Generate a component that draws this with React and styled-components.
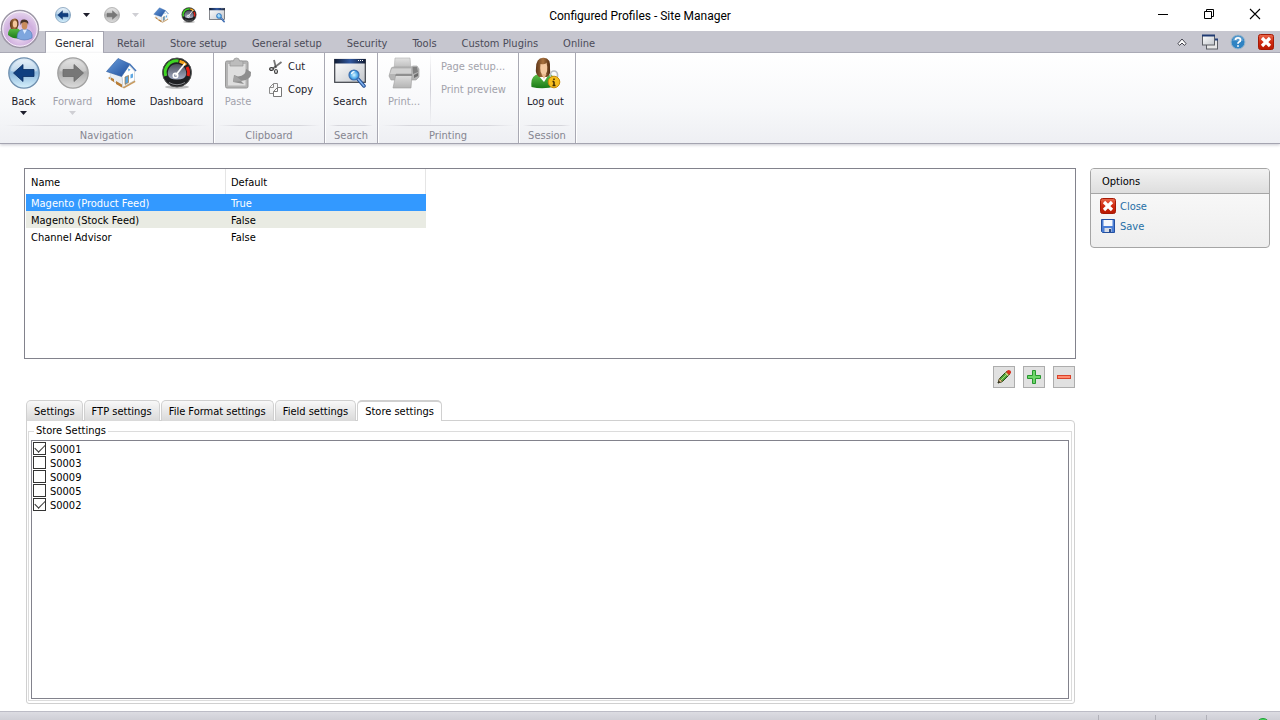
import React from "react";
import styled, { createGlobalStyle } from "styled-components";

const GlobalStyle = createGlobalStyle`
  * {
    box-sizing: border-box;
  }

  body {
    margin: 0;
    background: #ffffff;
    color: #000000;
    font-family: "DejaVu Sans Condensed", "DejaVu Sans", Tahoma, sans-serif;
    font-size: 11px;
    line-height: 14px;
  }

  button,
  input {
    font: inherit;
    margin: 0;
    padding: 0;
  }

  svg {
    display: block;
    flex: none;
  }
`;

const Window = styled.div`
  display: flex;
  flex-direction: column;
  height: 100vh;
  overflow: hidden;
  position: relative;
`;

const PlainButton = styled.button`
  align-items: center;
  background: none;
  border: 0;
  color: inherit;
  display: flex;
  justify-content: center;
`;

/* title bar */

const TitleBar = styled.header`
  align-items: center;
  display: grid;
  flex: none;
  grid-template-columns: 1fr auto 1fr;
  height: 31px;
`;

const QuickAccess = styled.div`
  align-items: center;
  display: flex;
  gap: 12px;
  padding: 0 0 2px 55px;
`;

const QuickSplit = styled.div`
  align-items: center;
  display: flex;
  gap: 12px;
  width: 37px;
`;

const WindowTitle = styled.h1`
  font-family: Roboto, "Segoe UI", sans-serif;
  font-size: 12px;
  font-weight: 400;
  line-height: 16px;
  margin: 0;
  white-space: nowrap;
`;

const WindowButtons = styled.div`
  display: flex;
  justify-content: flex-end;
  padding: 0 2px 3px 0;

  & > button {
    height: 28px;
    width: 46px;
  }
`;

const AppButton = styled(PlainButton)`
  left: 0;
  position: absolute;
  top: 9px;
`;

/* ribbon */

const RibbonTabs = styled.nav`
  align-items: stretch;
  background: #c6c6cf;
  border-bottom: 1px solid #a4a4b0;
  display: flex;
  flex: none;
  height: 22px;
  padding-left: 45px;
`;

const RibbonTab = styled.button`
  background: ${(p) => (p.$active ? "#ffffff" : "none")};
  border: 1px solid ${(p) => (p.$active ? "#a4a4b0" : "transparent")};
  border-bottom: 0;
  color: ${(p) => (p.$active ? "#1e1e2c" : "#4b4b58")};
  margin-bottom: ${(p) => (p.$active ? "-1px" : "0")};
  padding: ${(p) => (p.$active ? "2px 9px 0" : "4px 11px 0 12px")};
  white-space: nowrap;
`;

const RibbonTools = styled.div`
  align-items: center;
  display: flex;
  gap: 12px;
  margin-left: auto;
  padding-right: 6px;
`;

const Ribbon = styled.section`
  background: linear-gradient(#ffffff, #f7f8fa 60%, #eeeff3);
  border-bottom: 1px solid #a4a4b0;
  box-shadow: 0 1px 3px #c8c8d0;
  display: flex;
  flex: none;
  height: 91px;
`;

const Group = styled.div`
  border-right: 1px solid #a9a9b3;
  box-shadow: 1px 0 0 #ffffff;
  display: flex;
  flex-direction: column;
  width: ${(p) => p.$width}px;
`;

const GroupBody = styled.div`
  display: flex;
  flex: 1;
`;

const GroupLabel = styled.div`
  background: linear-gradient(90deg, transparent, #d6d6dc 20%, #d6d6dc 80%, transparent) top / 100% 1px no-repeat;
  color: #858590;
  height: 18px;
  margin: 0 4px;
  padding-top: 4px;
  text-align: center;
`;

const LargeButton = styled(PlainButton)`
  align-self: flex-start;
  color: #1e1e2c;
  flex-direction: column;
  padding-top: 4px;
  white-space: nowrap;
  width: ${(p) => p.$width}px;

  & > span {
    margin: 6px 0 2px;
  }

  &:disabled {
    color: #a2a2ab;
  }
`;

const SmallButtons = styled.div`
  align-items: flex-start;
  color: #1e1e2c;
  display: flex;
  flex-direction: column;
  gap: 7px;
  padding: 6px 0 0 ${(p) => p.$indent}px;

  & > button {
    gap: 4px;
    height: 16px;
    white-space: nowrap;
  }

  & > button:disabled {
    color: #a2a2ab;
  }
`;

const Divider = styled.div`
  background: linear-gradient(transparent, #d0d0d7, transparent);
  width: 1px;
`;

/* page */

const Page = styled.main`
  display: grid;
  flex: 1;
  gap: 14px;
  grid-template-columns: minmax(0, 1fr) 180px;
  min-height: 0;
  padding: 24px 10px 7px 24px;
`;

const Column = styled.div`
  display: flex;
  flex-direction: column;
  min-height: 0;
`;

const ProfileList = styled.div`
  border: 1px solid #82828c;
  flex: none;
  height: 191px;
  padding: 0 1px;
`;

const ProfileTable = styled.table`
  border-collapse: separate;
  border-spacing: 0;
  table-layout: fixed;
  width: 400px;

  & th,
  & td {
    font-weight: 400;
    height: 17px;
    padding: 3px 5px 0;
    text-align: left;
  }

  & th {
    border-right: 1px solid #e5e5e5;
    height: 25px;
  }
`;

const rowColors = {
  selected: "background: #3399ff; color: #ffffff;",
  shaded: "background: #e9ebe3;",
};

const ProfileRow = styled.tr`
  ${(p) => rowColors[p.$look]}
`;

const ListActions = styled.div`
  display: flex;
  gap: 8px;
  justify-content: flex-end;
  padding: 7px 1px 12px 0;
`;

const ActionButton = styled(PlainButton)`
  background: #e1e1e1;
  border: 1px solid #adadad;
  height: 22px;
  width: 22px;
`;

const Tabs = styled.div`
  display: flex;
  gap: 1px;
  padding-left: 2px;
`;

const Tab = styled.button`
  background: ${(p) => (p.$active ? "#ffffff" : "linear-gradient(#f8f8f8, #d9d9d9)")};
  border: 1px solid #d0d0d0;
  border-bottom: 0;
  border-radius: 5px 5px 0 0;
  border-top-width: ${(p) => (p.$active ? "2px" : "1px")};
  height: 21px;
  margin-bottom: ${(p) => (p.$active ? "-1px" : "0")};
  padding: ${(p) => (p.$active ? "0" : "1px")} 7px 0;
  position: relative;
  white-space: nowrap;
  z-index: 1;
`;

const TabPanel = styled.div`
  border: 1px solid #d0d0d0;
  border-radius: 0 4px 3px 3px;
  display: flex;
  flex: 1;
  margin: -1px 1px 0 2px;
  min-height: 0;
  padding: 3px 2px 2px 1px;
`;

const StoreGroup = styled.fieldset`
  border: 1px solid #dcdcdc;
  display: flex;
  flex: 1;
  margin: 0;
  min-width: 0;
  padding: 2px 2px 1px;

  & > legend {
    margin-left: 3px;
    padding: 0 2px;
  }
`;

const StoreList = styled.div`
  border: 1px solid #82828c;
  flex: 1;
  padding: 1px;
`;

const StoreRow = styled.label`
  align-items: flex-start;
  display: flex;
  gap: 4px;
  height: 14px;
  line-height: 16px;
`;

const CheckBox = styled.input`
  appearance: none;
  background: #ffffff;
  border: 1px solid #333333;
  display: grid;
  height: 13px;
  place-content: center;
  width: 13px;

  &:checked::before {
    border: solid #333333;
    border-width: 0 0 1px 1px;
    content: "";
    height: 5px;
    margin-bottom: 3px;
    transform: rotate(-45deg);
    width: 9px;
  }
`;

const OptionsPanel = styled.aside`
  align-self: start;
  background: linear-gradient(#fcfcfc, #eeeeee);
  border: 1px solid #a5a5a5;
  border-radius: 4px;
  min-height: 80px;
  overflow: hidden;

  & > h2 {
    background: linear-gradient(#f2f2f2, #dedede);
    border-bottom: 1px solid #a5a5a5;
    font-size: 11px;
    font-weight: 400;
    height: 25px;
    line-height: 26px;
    margin: 0;
    padding-left: 11px;
  }
`;

const OptionLinks = styled.div`
  display: flex;
  flex-direction: column;
  gap: 2px;
  padding: 4px 9px;
`;

const OptionLink = styled.a`
  align-items: flex-start;
  color: #266fa6;
  display: flex;
  gap: 4px;
  line-height: 18px;
  text-decoration: none;
`;

const StatusBar = styled.footer`
  background: linear-gradient(#dcdce2, #cfcfd6);
  border-top: 1px solid #bcbcc6;
  display: flex;
  flex: none;
  height: 9px;
  justify-content: flex-end;
  overflow: hidden;
  padding: 3px 10px 0 0;
`;

const StatusCell = styled.div`
  border-left: 1px solid #b0b0b8;
  display: flex;
  flex: none;
  height: 20px;
  justify-content: flex-end;
  width: ${(p) => p.$width}px;

  & > svg {
    margin-top: 3px;
  }
`;

/* icons */

const Icon = ({ size = 32, box = 32, children }) => (
  <svg width={size} height={size} viewBox={`0 0 ${box} ${box}`} aria-hidden="true">
    {children}
  </svg>
);

const IconColors = () => (
  <svg width="0" height="0" style={{ position: "absolute" }} aria-hidden="true">
    <defs>
      <linearGradient id="blueBall" x2="0" y2="1">
        <stop offset="0" stopColor="#e4eff8" />
        <stop offset=".5" stopColor="#8db8dc" />
        <stop offset="1" stopColor="#d9f2fd" />
      </linearGradient>
      <linearGradient id="grayBall" x2="0" y2="1">
        <stop offset="0" stopColor="#dedede" />
        <stop offset=".5" stopColor="#b0b0b0" />
        <stop offset="1" stopColor="#dcdcdc" />
      </linearGradient>
      <linearGradient id="roof" x2="1" y2="1">
        <stop offset="0" stopColor="#6b9fdc" />
        <stop offset="1" stopColor="#1c4c9c" />
      </linearGradient>
      <linearGradient id="gray" x2="0" y2="1">
        <stop offset="0" stopColor="#e2e2e2" />
        <stop offset="1" stopColor="#b4b4b4" />
      </linearGradient>
      <linearGradient id="screen" x2="1" y2="1">
        <stop offset="0" stopColor="#ffffff" />
        <stop offset="1" stopColor="#c3c7cc" />
      </linearGradient>
      <linearGradient id="navy" x2="1" y2="0">
        <stop offset="0" stopColor="#111c33" />
        <stop offset=".5" stopColor="#31589f" />
        <stop offset="1" stopColor="#111c33" />
      </linearGradient>
      <linearGradient id="dial" x2="0" y2="1">
        <stop offset="0" stopColor="#4b4f5c" />
        <stop offset="1" stopColor="#a5acc4" />
      </linearGradient>
      <radialGradient id="orb" cx=".5" cy=".65" r=".6">
        <stop offset="0" stopColor="#f3e4f6" />
        <stop offset=".6" stopColor="#cfaede" />
        <stop offset="1" stopColor="#e4d3ec" />
      </radialGradient>
      <radialGradient id="lens">
        <stop offset="0" stopColor="#d5f5ff" />
        <stop offset="1" stopColor="#1b8be0" />
      </radialGradient>
      <linearGradient id="red" x2="0" y2="1">
        <stop offset="0" stopColor="#ea6a4d" />
        <stop offset=".5" stopColor="#d02a10" />
        <stop offset="1" stopColor="#b81800" />
      </linearGradient>
      <linearGradient id="hair" x2="1" y2="0">
        <stop offset="0" stopColor="#5d3517" />
        <stop offset=".5" stopColor="#a8723f" />
        <stop offset="1" stopColor="#4e2a10" />
      </linearGradient>
      <linearGradient id="green" x2="0" y2="1">
        <stop offset="0" stopColor="#5fc04a" />
        <stop offset="1" stopColor="#1a7a16" />
      </linearGradient>
    </defs>
  </svg>
);

const BackIcon = ({ size }) => (
  <Icon size={size}>
    <circle cx="16" cy="16" r="15.2" fill="url(#blueBall)" stroke="#6f8fae" strokeWidth="1.3" />
    <path d="M3 14a13 11 0 0 1 26 0Q16 17 3 14Z" fill="#ffffff" opacity=".35" />
    <path d="M5.5 16 15 7.5V12.500H26V19.500H15V24.500Z" fill="#103f80" stroke="#0a2c60" strokeWidth=".8" />
  </Icon>
);

const ForwardIcon = ({ size }) => (
  <Icon size={size}>
    <circle cx="16" cy="16" r="15.2" fill="url(#grayBall)" stroke="#a0a0a0" strokeWidth="1.3" />
    <path d="M3 14a13 11 0 0 1 26 0Q16 17 3 14Z" fill="#ffffff" opacity=".25" />
    <path d="M26.500 16 17 7.500V12.500H6V19.500H17V24.500Z" fill="#777777" stroke="#6a6a6a" strokeWidth=".8" />
  </Icon>
);

const HomeIcon = ({ size }) => (
  <Icon size={size}>
    <path d="M3 21 6 19 29 22 30.500 25 19 31.500Z" fill="#c99a5c" />
    <path d="M5 14.500 17 19 18 30 5.500 22.500Z" fill="#e9eef4" stroke="#c3cbd4" strokeWidth=".5" />
    <path d="M17 19 24 8.500 29.500 14V23.500L18 30Z" fill="#ffffff" stroke="#b9c2cc" strokeWidth=".6" />
    <path d="M1.500 14.500 13 1.500 25 7 16.500 19.500Z" fill="url(#roof)" stroke="#2c5b9e" strokeWidth=".6" />
    <path d="M24.500 7 31 14" stroke="#4877b8" strokeWidth="1.600" />
    <path d="M20 20 23.500 18.500V25.500L20 27.500Z" fill="#5aa3de" stroke="#a57539" strokeWidth=".7" />
    <path d="M25.500 17.500 28 16.500V20.500L25.500 21.500Z" fill="#5fa7e2" />
    <path d="M23 11.500 25.500 12.500 23.500 14.500Z" fill="#5fa7e2" />
    <path d="M6 20.500 9 22V25L6 23ZM11 24 17 27.500V30.500L11 27Z" fill="#b97d34" />
  </Icon>
);

const DashboardIcon = ({ size }) => (
  <Icon size={size}>
    <ellipse cx="16" cy="30" rx="12" ry="1.800" fill="#000000" opacity=".25" />
    <circle cx="16" cy="15.500" r="14.500" fill="#1e2023" stroke="#555555" />
    <path d="M4.800 19A11.500 11.500 0 0 1 17.500 4" fill="none" stroke="#3fd323" strokeWidth="3" />
    <path d="M18.500 4.200A11.500 11.500 0 0 1 25 8" fill="none" stroke="#f3a31b" strokeWidth="3" />
    <path d="M26 10A11.500 11.500 0 0 1 27 19" fill="none" stroke="#e51f16" strokeWidth="3" />
    <path d="M7 18A9.200 9.200 0 1 1 25 18Q24 22.500 16 22.500T7 18Z" fill="url(#dial)" />
    <path d="M14.500 18.500 24 6.500" stroke="#ffffff" strokeWidth="1.700" />
    <circle cx="14.500" cy="18.500" r="2.300" fill="none" stroke="#ffffff" strokeWidth="1.500" />
    <path d="M8 25.500Q16 30 24 25.500" fill="none" stroke="#85868a" />
  </Icon>
);

const SearchIcon = ({ size }) => (
  <Icon size={size}>
    <rect x=".7" y="2.500" width="30.600" height="22.800" fill="url(#screen)" stroke="#3e4249" strokeWidth="1.200" />
    <rect x=".5" y="2" width="31" height="4.500" fill="url(#navy)" />
    <path d="M26 3.500h1M28 3.500h1M24 3.500h1" stroke="#ffffff" />
    <path d="M24 22 30 29" stroke="#234f95" strokeWidth="3.500" strokeLinecap="round" />
    <path d="M24 22 30 29" stroke="#82b4ef" strokeWidth="1.500" strokeLinecap="round" />
    <circle cx="20" cy="18" r="5" fill="url(#lens)" stroke="#3f6fae" strokeWidth="1.200" />
    <path d="M17.500 17a3 3 0 0 1 3-2.300" fill="none" stroke="#ffffff" strokeWidth="1.200" />
  </Icon>
);

const PasteIcon = () => (
  <Icon>
    <rect x="3.500" y="4" width="22.500" height="27" rx="1.500" fill="#b4b4b4" stroke="#979797" />
    <path d="M6 7H23.500V28.500H6Z" fill="#dedede" />
    <path d="M9 4H11.500Q11.500 1 14.500 1T17.500 4H20Q21 4 21 6V9H8V6Q8 4 9 4Z" fill="#bcbcbc" stroke="#979797" strokeWidth=".7" />
    <path d="M12 18 16 19.500Q24 19 24 12L29 15Q30 23 19 24L22 27 11 25Z" fill="#8e8e8e" />
    <path d="M11 25 12.500 18 20 24Z" fill="#a3a3a3" />
  </Icon>
);

const CutIcon = () => (
  <Icon size={16} box={16}>
    <path d="M6 1 8 9M13.500 3 5 9.500" fill="none" stroke="#777777" strokeWidth="1.800" />
    <ellipse cx="3.500" cy="10" rx="1.900" ry="1.400" fill="none" stroke="#333333" strokeWidth="1.200" />
    <ellipse cx="8" cy="12.500" rx="1.400" ry="2" fill="none" stroke="#333333" strokeWidth="1.200" />
    <circle cx="7.500" cy="7.500" r="1" fill="#444444" />
  </Icon>
);

const CopyIcon = () => (
  <Icon size={16} box={16}>
    <path d="M5.500 1.500H9.500V11.500H1.500V5.500ZM5.500 1.500V5.500H1.500" fill="#f7f7f7" stroke="#8c8c8c" />
    <path d="M9.500 5.500H13.500V14.500H5.500V9.500ZM9.500 5.500V9.500H5.500" fill="#ffffff" stroke="#777777" />
  </Icon>
);

const PrintIcon = () => (
  <Icon>
    <path d="M7 1H22L23 13H6Z" fill="url(#gray)" stroke="#b0b0b0" strokeWidth=".6" />
    <path d="M3 12Q3 10 6 10H23L25 9H29L31 12V20L28 23H3L1 19Z" fill="#b5b5b5" stroke="#9a9a9a" strokeWidth=".6" />
    <path d="M4 11.500H23V17H2Z" fill="#d1d1d1" />
    <path d="M24.500 10H29L30 15 25 17Z" fill="#818181" />
    <path d="M26 18 30 16V19L26 21Z" fill="#6e6e6e" />
    <path d="M8 17H24L23 31H5Z" fill="url(#gray)" stroke="#a0a0a0" strokeWidth=".6" />
    <path d="M8 17H24V19H7Z" fill="#8f8f8f" />
  </Icon>
);

const LogoutIcon = () => (
  <Icon>
    <path d="M1.500 30Q0 18 9 17L15 20 21 17.500Q26 20 26 29 14 33 1.500 30Z" fill="url(#green)" />
    <path d="M7.500 17.500 14 25 18.500 18Z" fill="#ffffff" />
    <path d="M13 .700Q21 0 20 12 21 18 17 20H9Q5 17 6 11 6 1 13 .700Z" fill="url(#hair)" />
    <path d="M10.500 7Q16 8 16.500 5.500 19 16 14 18.500 9 17 10.500 7Z" fill="#f4c9a0" />
    <path d="M11.500 17 14 22 16.500 17Z" fill="#eab88c" />
    <path d="M20.500 20V17.500a3.500 3.500 0 0 1 7 0V20" fill="none" stroke="#b9bdc3" strokeWidth="1.600" />
    <circle cx="24" cy="25" r="5.800" fill="#f6bd1e" stroke="#c58a0c" />
    <path d="M24 21.500v1.500M24 24.500v4M22.500 24.500H24M22.500 28.500h3" stroke="#402c00" strokeWidth="1.500" />
  </Icon>
);

const UsersIcon = () => (
  <svg width="40" height="40" viewBox="0 0 40 40" aria-hidden="true">
    <circle cx="20" cy="20" r="18.500" fill="url(#orb)" stroke="#9c97a5" strokeWidth="1.500" />
    <circle cx="20" cy="20" r="17.200" fill="none" stroke="#ffffff" opacity=".8" />
    <path d="M8 26Q8 18.500 14 18.500T22 25V29Q14 31 8 26Z" fill="url(#green)" />
    <path d="M14.500 9.500Q19 9 18.500 16L17 20H11L10 17Q9 10 14.500 9.500Z" fill="url(#hair)" />
    <ellipse cx="15" cy="15" rx="2.200" ry="3.600" fill="#f3c69b" />
    <path d="M17 29Q17 22 22 20.500H27Q33 22 32 29 24 33 17 29Z" fill="#7ea6de" stroke="#4c76b5" strokeWidth=".6" />
    <path d="M22.500 20.500 24.500 25 27 20.500Z" fill="#dcebff" />
    <ellipse cx="24.500" cy="16" rx="2.900" ry="4.500" fill="#c98c5c" />
    <path d="M20.500 16Q19.500 10 24.500 10.500T28 16Q28 13 24 13 21 13.500 20.500 16Z" fill="#4a3427" />
  </svg>
);

const WindowsIcon = () => (
  <Icon size={16} box={16}>
    <rect x="4.500" y="5.500" width="11" height="9.500" fill="#e7e7e7" stroke="#5c5f65" />
    <path d="M4.500 5.500H16" stroke="#25427d" strokeWidth="2" />
    <rect x=".5" y="1.500" width="12" height="9.500" fill="url(#screen)" stroke="#5c5f65" />
    <path d="M0 1.500H13" stroke="#1f3a73" strokeWidth="2" />
  </Icon>
);

const HelpIcon = () => (
  <Icon size={16} box={16}>
    <circle cx="8" cy="8" r="7" fill="#2f83c3" stroke="#a0b9cc" />
    <path d="M2.500 7a5.500 5 0 0 1 11 0Z" fill="#ffffff" opacity=".2" />
    <path d="M5.500 6Q5.500 3.800 8 3.800T10.500 6Q10.500 7.300 9 8 8 8.500 8 9.700M8 11.200V12.800" fill="none" stroke="#ffffff" strokeWidth="1.800" />
  </Icon>
);

const CloseIcon = () => (
  <Icon size={16} box={16}>
    <rect x=".5" y=".5" width="15" height="15" rx="2" fill="url(#red)" stroke="#a51a06" />
    <path d="M4 4 12 12M12 4 4 12" stroke="#ffffff" strokeWidth="3.200" />
  </Icon>
);

const SaveIcon = () => (
  <Icon size={16} box={16}>
    <path d="M1.500 1.500H14.500V14.500H2.500L1.500 13.500Z" fill="#4a7ed6" stroke="#2450a0" />
    <path d="M3.500 2H12.500V8H3.500Z" fill="#f4f7fc" />
    <path d="M4.500 10H11.500V14H4.500Z" fill="#d8dde6" />
    <path d="M9 11H11V14H9Z" fill="#2e4c86" />
  </Icon>
);

const PencilIcon = () => (
  <Icon size={16} box={16}>
    <path d="M2 14 3.500 9.500 10.500 2.500 13.500 5.500 6.500 12.500Z" fill="#4fa53b" stroke="#25491a" />
    <path d="M5 11 11.500 4.500" stroke="#a7dc7c" />
    <path d="M2 14 3.500 9.500 6.500 12.500Z" fill="#e9c68c" stroke="#5b4823" strokeWidth=".6" />
    <path d="M2 14 2.800 11.700 4.300 13.200Z" fill="#151515" />
    <path d="M10 3 12 1Q15.500 1 15 4L13 6Z" fill="#d6311f" />
    <path d="M9.300 3.700 12.300 6.700" stroke="#e2d18d" strokeWidth="1.200" />
  </Icon>
);

const PlusIcon = () => (
  <Icon size={16} box={16}>
    <path d="M6.500 1.500H9.500V6.500H14.500V9.500H9.500V14.500H6.500V9.500H1.500V6.500H6.500Z" fill="#6ed669" stroke="#27962f" />
  </Icon>
);

const MinusIcon = () => (
  <Icon size={16} box={16}>
    <rect x="1.500" y="6.500" width="13" height="3" fill="#ff8d72" stroke="#d9432b" />
  </Icon>
);

const Caret = ({ color = "#1e1e2c" }) => (
  <svg width="7" height="4" viewBox="0 0 7 4" aria-hidden="true">
    <path d="M0 0H7L3.500 4Z" fill={color} />
  </svg>
);

const ribbonTabs = [
  "General",
  "Retail",
  "Store setup",
  "General setup",
  "Security",
  "Tools",
  "Custom Plugins",
  "Online",
];

const profiles = [
  { name: "Magento (Product Feed)", isDefault: "True", look: "selected" },
  { name: "Magento (Stock Feed)", isDefault: "False", look: "shaded" },
  { name: "Channel Advisor", isDefault: "False" },
];

const settingTabs = [
  "Settings",
  "FTP settings",
  "File Format settings",
  "Field settings",
  "Store settings",
];

const stores = [
  { id: "S0001", enabled: true },
  { id: "S0003", enabled: false },
  { id: "S0009", enabled: false },
  { id: "S0005", enabled: false },
  { id: "S0002", enabled: true },
];

const WindowHeader = () => (
  <TitleBar>
    <QuickAccess>
      <QuickSplit>
        <PlainButton aria-label="Back"><BackIcon size={16} /></PlainButton>
        <PlainButton aria-label="Back history"><Caret /></PlainButton>
      </QuickSplit>
      <QuickSplit>
        <PlainButton aria-label="Forward" disabled><ForwardIcon size={16} /></PlainButton>
        <PlainButton aria-label="Forward history" disabled><Caret color="#cfcfd4" /></PlainButton>
      </QuickSplit>
      <PlainButton aria-label="Home"><HomeIcon size={16} /></PlainButton>
      <PlainButton aria-label="Dashboard"><DashboardIcon size={16} /></PlainButton>
      <PlainButton aria-label="Search"><SearchIcon size={16} /></PlainButton>
    </QuickAccess>
    <WindowTitle>Configured Profiles - Site Manager</WindowTitle>
    <WindowButtons>
      <PlainButton aria-label="Minimize">
        <Icon size={12} box={12}><path d="M1 6.500H11" stroke="#000000" /></Icon>
      </PlainButton>
      <PlainButton aria-label="Restore">
        <Icon size={12} box={12}>
          <path d="M1.500 3.500H8.500V10.500H1.500ZM3.500 3.500V1.500H10.500V8.500H8.500" fill="none" stroke="#000000" />
        </Icon>
      </PlainButton>
      <PlainButton aria-label="Close window">
        <Icon size={12} box={12}><path d="M1 1 11 11M11 1 1 11" stroke="#000000" strokeWidth="1.100" /></Icon>
      </PlainButton>
    </WindowButtons>
  </TitleBar>
);

const MainRibbon = () => (
  <Ribbon>
    <Group $width={214}>
      <GroupBody>
        <LargeButton $width={47}><BackIcon /><span>Back</span><Caret /></LargeButton>
        <LargeButton $width={51} disabled><ForwardIcon /><span>Forward</span><Caret color="#cfcfd4" /></LargeButton>
        <LargeButton $width={46}><HomeIcon /><span>Home</span></LargeButton>
        <LargeButton $width={65}><DashboardIcon /><span>Dashboard</span></LargeButton>
      </GroupBody>
      <GroupLabel>Navigation</GroupLabel>
    </Group>
    <Group $width={111}>
      <GroupBody>
        <LargeButton $width={48} disabled><PasteIcon /><span>Paste</span></LargeButton>
        <SmallButtons $indent={6}>
          <PlainButton><CutIcon />Cut</PlainButton>
          <PlainButton><CopyIcon />Copy</PlainButton>
        </SmallButtons>
      </GroupBody>
      <GroupLabel>Clipboard</GroupLabel>
    </Group>
    <Group $width={53}>
      <GroupBody>
        <LargeButton $width={50}><SearchIcon /><span>Search</span></LargeButton>
      </GroupBody>
      <GroupLabel>Search</GroupLabel>
    </Group>
    <Group $width={141}>
      <GroupBody>
        <LargeButton $width={52} disabled><PrintIcon /><span>Print...</span></LargeButton>
        <Divider />
        <SmallButtons $indent={10}>
          <PlainButton disabled>Page setup...</PlainButton>
          <PlainButton disabled>Print preview</PlainButton>
        </SmallButtons>
      </GroupBody>
      <GroupLabel>Printing</GroupLabel>
    </Group>
    <Group $width={57}>
      <GroupBody>
        <LargeButton $width={53}><LogoutIcon /><span>Log out</span></LargeButton>
      </GroupBody>
      <GroupLabel>Session</GroupLabel>
    </Group>
  </Ribbon>
);

const StoreSettings = () => (
  <TabPanel role="tabpanel">
    <StoreGroup>
      <legend>Store Settings</legend>
      <StoreList>
        {stores.map((store) => (
          <StoreRow key={store.id}>
            <CheckBox type="checkbox" defaultChecked={store.enabled} />
            {store.id}
          </StoreRow>
        ))}
      </StoreList>
    </StoreGroup>
  </TabPanel>
);

export default function App() {
  return (
    <Window>
      <GlobalStyle />
      <IconColors />
      <WindowHeader />
      <AppButton aria-label="Application menu"><UsersIcon /></AppButton>
      <RibbonTabs>
        {ribbonTabs.map((tab) => (
          <RibbonTab key={tab} $active={tab === "General"}>{tab}</RibbonTab>
        ))}
        <RibbonTools>
          <PlainButton aria-label="Collapse ribbon">
            <Icon size={16} box={16}>
              <path d="M4 9.500 8 5 12 9.500 10.500 11.500 8 9 5.500 11.500Z" fill="#ffffff" stroke="#44444e" />
            </Icon>
          </PlainButton>
          <PlainButton aria-label="Windows"><WindowsIcon /></PlainButton>
          <PlainButton aria-label="Help"><HelpIcon /></PlainButton>
          <PlainButton aria-label="Close page"><CloseIcon /></PlainButton>
        </RibbonTools>
      </RibbonTabs>
      <MainRibbon />
      <Page>
        <Column>
          <ProfileList>
            <ProfileTable>
              <thead>
                <tr>
                  <th scope="col">Name</th>
                  <th scope="col">Default</th>
                </tr>
              </thead>
              <tbody>
                {profiles.map((profile) => (
                  <ProfileRow key={profile.name} $look={profile.look}>
                    <td>{profile.name}</td>
                    <td>{profile.isDefault}</td>
                  </ProfileRow>
                ))}
              </tbody>
            </ProfileTable>
          </ProfileList>
          <ListActions>
            <ActionButton aria-label="Edit"><PencilIcon /></ActionButton>
            <ActionButton aria-label="Add"><PlusIcon /></ActionButton>
            <ActionButton aria-label="Remove"><MinusIcon /></ActionButton>
          </ListActions>
          <Tabs role="tablist">
            {settingTabs.map((tab) => (
              <Tab
                key={tab}
                role="tab"
                aria-selected={tab === "Store settings"}
                $active={tab === "Store settings"}
              >
                {tab}
              </Tab>
            ))}
          </Tabs>
          <StoreSettings />
        </Column>
        <OptionsPanel>
          <h2>Options</h2>
          <OptionLinks>
            <OptionLink href="#close"><CloseIcon />Close</OptionLink>
            <OptionLink href="#save"><SaveIcon />Save</OptionLink>
          </OptionLinks>
        </OptionsPanel>
      </Page>
      <StatusBar>
        <StatusCell $width={57} />
        <StatusCell $width={51} />
        <StatusCell $width={64}>
          <Icon size={14} box={14}><circle cx="7" cy="7" r="6.500" fill="#45d65a" stroke="#1f9e36" /></Icon>
        </StatusCell>
      </StatusBar>
    </Window>
  );
}
